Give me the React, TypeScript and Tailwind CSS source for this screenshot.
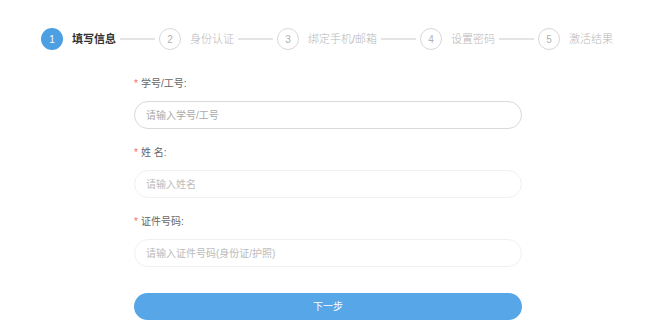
const steps = ['填写信息', '身份认证', '绑定手机/邮箱', '设置密码', '激活结果'];

const fields = [
  { label: '学号/工号:', placeholder: '请输入学号/工号', focused: true },
  { label: '姓 名:', placeholder: '请输入姓名', focused: false },
  { label: '证件号码:', placeholder: '请输入证件号码(身份证/护照)', focused: false },
];

export default function App() {
  return (
    <div
      className="w-[649px] h-[323px] bg-white overflow-hidden"
      style={{ fontFamily: '"Liberation Sans", "Noto Sans CJK SC", sans-serif' }}
    >
      <div className="flex items-center pl-[41px] pt-[28px] h-[50px]">
        {steps.map((s, i) => (
          <div key={s} className="flex items-center">
            <div
              className={
                i === 0
                  ? 'w-[22px] h-[22px] rounded-full bg-[#4c9fe3] text-white text-[10px] flex items-center justify-center'
                  : 'w-[22px] h-[22px] rounded-full border border-[#d8d8d8] text-[#b0b0b0] text-[10px] flex items-center justify-center'
              }
            >
              {i + 1}
            </div>
            <span
              className={
                i === 0
                  ? 'ml-[9px] text-[11px] font-bold text-[#333] whitespace-nowrap'
                  : 'ml-[9px] text-[11px] font-light text-[#b8b8b8] whitespace-nowrap'
              }
            >
              {s}
            </span>
            {i < steps.length - 1 && <div className="mx-[4px] w-[35px] h-[2px] bg-[#e4e4e4]" />}
          </div>
        ))}
      </div>

      <div className="ml-[134px] w-[388px] mt-[26px] flex flex-col">
        {fields.map((f, i) => (
          <div key={f.label} className={i === 0 ? 'flex flex-col' : 'flex flex-col mt-[16px]'}>
            <div className="h-4 leading-4 text-[10px] text-[#666]">
              <span className="text-[#f56c6c] mr-[3px]">*</span>
              {f.label}
            </div>
            <input
              placeholder={f.placeholder}
              className={
                f.focused
                  ? 'mt-[9px] h-[28px] rounded-full border border-[#d9d9d9] px-[11px] text-[10px] outline-none placeholder:text-[#aaa]'
                  : 'mt-[9px] h-[28px] rounded-full border border-[#f0f0f0] px-[11px] text-[10px] outline-none placeholder:text-[#bbb]'
              }
            />
          </div>
        ))}
        <button className="mt-[26px] h-[27px] rounded-full bg-[#57a6e8] text-white text-[10px]">
          下一步
        </button>
      </div>
    </div>
  );
}
